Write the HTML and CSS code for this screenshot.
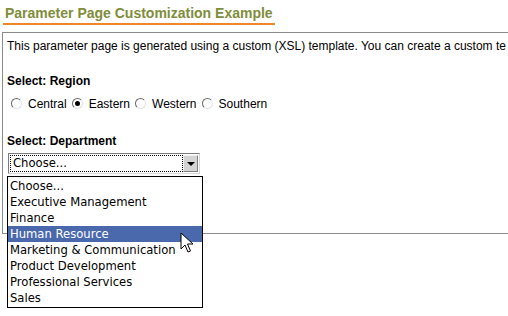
FILE: index.html
```html
<!DOCTYPE html>
<html>
<head>
<meta charset="utf-8">
<link rel="stylesheet" href="styles.css">
</head>
<body>
<div class="page">
  <div class="title-row"><h1 class="title">Parameter Page Customization Example</h1></div>
  <div class="panel">
    <p class="intro">This parameter page is generated using a custom (XSL) template. You can create a custom te</p>
    <div class="label">Select: Region</div>
    <div class="radios">
      <span class="radio"></span><span class="rlabel">Central</span>
      <span class="radio checked"></span><span class="rlabel">Eastern</span>
      <span class="radio"></span><span class="rlabel">Western</span>
      <span class="radio"></span><span class="rlabel">Southern</span>
    </div>
    <div class="label dept">Select: Department</div>
    <div class="select-wrap">
      <div class="select">
        <div class="select-value">Choose...</div>
        <div class="select-btn"><span class="tri"></span></div>
      </div>
      <ul class="list">
        <li>Choose...</li>
        <li>Executive Management</li>
        <li>Finance</li>
        <li class="sel">Human Resource</li>
        <li>Marketing &amp; Communication</li>
        <li>Product Development</li>
        <li>Professional Services</li>
        <li>Sales</li>
      </ul>
      <svg class="cursor" width="14" height="22" viewBox="0 0 14 22"><path d="M1 1 L1 17 L5 13 L8 20 L10.5 19 L7.5 12 L13 12 Z" fill="#fff" stroke="#000" stroke-width="1" stroke-linejoin="miter"/></svg>
    </div>
  </div>
</div>
</body>
</html>
```
FILE: styles.css
```css
html, body { margin: 0; padding: 0; background: #fff; }
body { font-family: "Liberation Sans", Arial, sans-serif; color: #000; overflow: hidden; width: 508px; height: 316px; }
.title-row { padding: 4px 0 0 3px; }
.title {
  display: inline-block;
  margin: 0;
  font-size: 14px;
  line-height: 16px;
  font-weight: bold;
  color: #808d3b;
  padding: 0 2px 2px 2px;
  border-bottom: 2px solid #f0862a;
}
.panel {
  margin: 7px 0 0 2px;
  border: 1px solid #8a8a8a;
  border-right: none;
  width: 600px;
  height: 202px;
  padding: 0 0 0 4px;
  box-sizing: border-box;
}
.intro {
  margin: 6px 0 0 0;
  font-size: 12px;
  line-height: 14px;
  white-space: nowrap;
}
.label {
  margin-top: 21px;
  font-size: 12px;
  line-height: 14px;
  font-weight: bold;
}
.dept { margin-top: 23px; }
.radios {
  margin-top: 9px;
  display: flex;
  align-items: center;
  font-size: 12px;
  line-height: 14px;
  padding-left: 4px;
}
.radio {
  width: 9px; height: 9px;
  border-radius: 50%;
  border: 1px solid;
  border-color: #6a6a6a #e4e4e4 #e4e4e4 #6a6a6a;
  background: #fff;
  margin-right: 6px;
  position: relative;
  top: -1px;
}
.radio.checked::after {
  content: "";
  position: absolute;
  left: 2px; top: 2px;
  width: 5px; height: 5px;
  border-radius: 50%;
  background: #000;
}
.rlabel { margin-right: 5px; }
.select-wrap { position: relative; margin-top: 5px; margin-left: 1px; }
.select {
  width: 192px; height: 21px;
  box-sizing: border-box;
  border: 1px solid;
  border-color: #7a7a7a #d8d8d8 #d8d8d8 #7a7a7a;
  background: #fff;
  display: flex;
  padding: 1px;
}
.select-value {
  flex: 1;
  border: 1px dotted #000;
  font-family: "DejaVu Sans", sans-serif;
  font-size: 11.6px;
  line-height: 15px;
  padding-left: 2px;
}
.select-btn {
  width: 15px;
  background: #d4d4d4;
  border: 1px solid;
  border-color: #f0f0f0 #808080 #808080 #f0f0f0;
  box-sizing: border-box;
  display: flex;
  align-items: center;
  justify-content: center;
}
.tri {
  width: 0; height: 0;
  border-left: 4px solid transparent;
  border-right: 4px solid transparent;
  border-top: 4px solid #000;
}
.list {
  position: absolute;
  left: -1px; top: 23px;
  width: 196px;
  margin: 0; padding: 1px 0;
  list-style: none;
  background: #fff;
  border: 1px solid #000;
  box-sizing: border-box;
  font-family: "DejaVu Sans", sans-serif;
  font-size: 11.6px;
}
.list li { height: 16px; line-height: 16px; padding-left: 2px; }
.list li.sel { background: #4a69ad; color: #fff; }
.cursor { position: absolute; left: 172px; top: 79px; }
```
